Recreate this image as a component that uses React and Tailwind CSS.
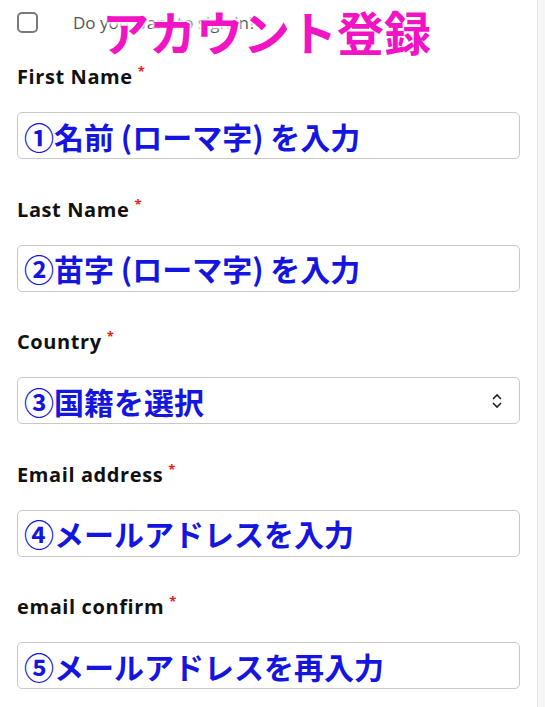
import React from "react";

const fields = [
  { label: "First Name", hint: "①名前 (ローマ字) を入力" },
  { label: "Last Name", hint: "②苗字 (ローマ字) を入力" },
  { label: "Country", hint: "③国籍を選択", select: true },
  { label: "Email address", hint: "④メールアドレスを入力" },
  { label: "email confirm", hint: "⑤メールアドレスを再入力" },
];

const labelFont = { fontFamily: "'Open Sans', Lato, sans-serif" };
const jpFont = { fontFamily: "'Noto Sans CJK JP', 'Noto Sans', sans-serif" };

export default function App() {
  return (
    <div className="flex w-[545px] h-[707px] bg-white overflow-hidden">
      <div className="flex-1 pl-[17px] pr-[17px]">
        {/* checkbox row, pink title pasted over it */}
        <div className="relative h-[44px] flex items-center pt-[1px]">
          <div className="w-[21px] h-[21px] rounded-[5px] border-2 border-[#7a7a7a] bg-white" />
          <span className="ml-[35px] text-[17px] text-[#555]" style={labelFont}>
            Do you want to sign in?
          </span>
          <div
            className="absolute left-[85px] top-[7px] text-[47px] leading-none font-bold text-[#f214c4] [text-shadow:0_0_5px_#fff,0_0_5px_#fff,0_0_5px_#fff,0_0_5px_#fff]"
            style={jpFont}
          >
            アカウント登録
          </div>
        </div>

        {fields.map((f, i) => (
          <div key={i} className={i === 0 ? "pt-[20px]" : "pt-[37.5px]"}>
            <div className="text-[20px] leading-[26px] font-bold tracking-[0.6px] text-[#111] flex items-start" style={labelFont}>
              {f.label}
              <span className="ml-[5px] text-[13px] leading-[14px] text-[#e0201a]">*</span>
            </div>
            <div className="mt-[22px] h-[47px] w-[503px] rounded-[5px] border border-[#c8c8c8] bg-white flex items-center pl-[6px] pr-[16px]">
              <span className="flex-1 text-[30px] leading-none font-bold text-[#1515e0] whitespace-pre" style={jpFont}>
                {f.hint}
              </span>
              {f.select && (
                <svg width="12" height="16" viewBox="0 0 12 16" fill="none" stroke="#222" strokeWidth="1.6">
                  <path d="M2 6 L6 2 L10 6" />
                  <path d="M2 10 L6 14 L10 10" />
                </svg>
              )}
            </div>
          </div>
        ))}
      </div>
      <div className="w-[9px] h-full bg-[#f6f6f6] border-l border-[#e4e4e4]" />
    </div>
  );
}
